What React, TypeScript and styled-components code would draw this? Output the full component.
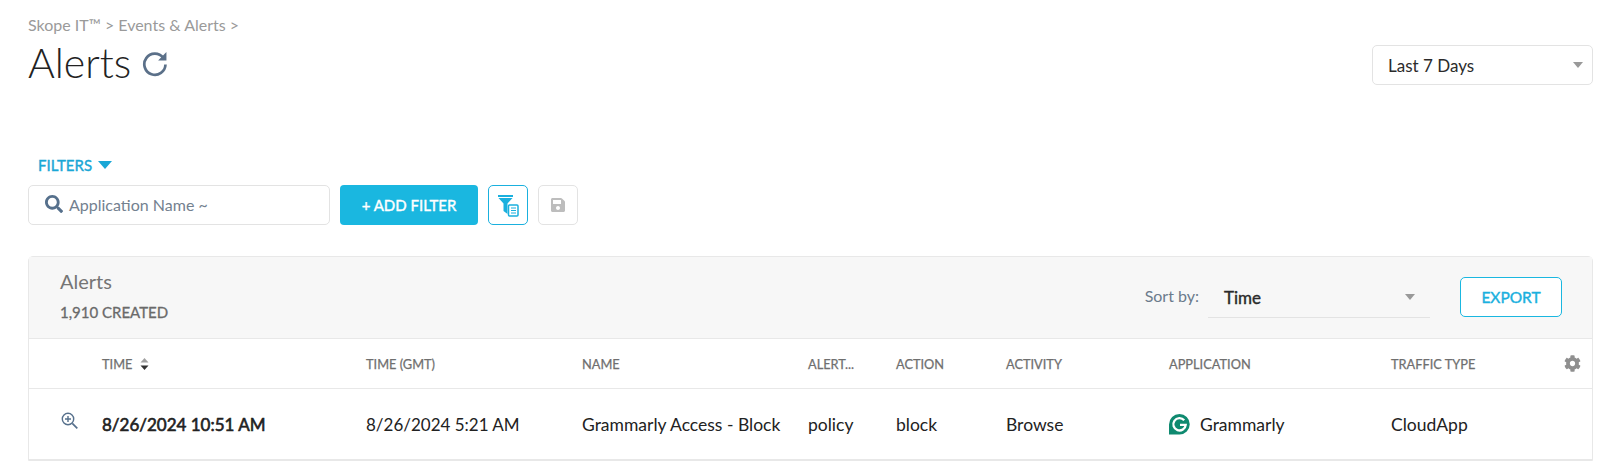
import styled, { createGlobalStyle } from 'styled-components'
import { FC } from 'react'
import { FaCog, FaSave, FaSearch } from 'react-icons/fa'

const GlobalStyle = createGlobalStyle`
  html, body {
    margin: 0;
    background: #fff;
    font-family: Lato, "Liberation Sans", sans-serif;
    color: #222;
  }
`

const Page = styled.div`
  width: 1600px;
  height: 462px;
  box-sizing: border-box;
  padding: 15px 7px 0 28px;
  overflow: hidden;
`

const TopRow = styled.div`
  display: flex;
  justify-content: space-between;
  align-items: flex-start;
  height: 140px;
`

const Breadcrumb = styled.div`
  font-size: 16px;
  line-height: 20px;
  color: #9a9a9a;
`

const TitleRow = styled.div`
  display: flex;
  align-items: center;
  gap: 10px;
  height: 42px;
  margin-top: 7px;
`

const Title = styled.h1`
  margin: 0;
  font-size: 41px;
  line-height: 42px;
  font-weight: 300;
  color: #222;
`

const DateSelect = styled.div`
  box-sizing: border-box;
  width: 221px;
  height: 40px;
  margin-top: 30px;
  padding: 0 9px 0 15px;
  display: flex;
  align-items: center;
  justify-content: space-between;
  background: #fff;
  border: 1px solid #e3e3e3;
  border-radius: 5px;
  font-size: 17px;
  color: #2b2b2b;
`

const Caret = styled.span<{ $color?: string; $size?: number }>`
  display: inline-block;
  width: 0;
  height: 0;
  border-left: ${(p) => p.$size ?? 5}px solid transparent;
  border-right: ${(p) => p.$size ?? 5}px solid transparent;
  border-top: ${(p) => (p.$size ?? 5) + 1}px solid ${(p) => p.$color ?? '#999'};
`

const FiltersToggle = styled.div`
  display: flex;
  align-items: center;
  gap: 6px;
  height: 20px;
  margin-left: 10px;
  font-size: 15px;
  -webkit-text-stroke: 0.4px #1aa7d6;
  color: #1aa7d6;
`

const FilterBar = styled.div`
  display: flex;
  align-items: center;
  gap: 10px;
  margin-top: 10px;
`

const SearchBox = styled.div`
  box-sizing: border-box;
  width: 302px;
  height: 40px;
  padding: 0 0 2px 16px;
  display: flex;
  align-items: center;
  gap: 6px;
  border: 1px solid #e3e3e3;
  border-radius: 5px;
  font-size: 16px;
  color: #73818f;
  svg {
    color: #56708c;
  }
`

const AddButton = styled.button`
  width: 138px;
  height: 40px;
  border: 0;
  border-radius: 4px;
  background: #1ab7e0;
  color: #fff;
  -webkit-text-stroke: 0.4px #fff;
  font: 400 15px Lato, sans-serif;
`

const IconButton = styled.button<{ $active?: boolean }>`
  box-sizing: border-box;
  width: 40px;
  height: 40px;
  padding: 0;
  display: flex;
  align-items: center;
  justify-content: center;
  background: #fff;
  border: 1px solid ${(p) => (p.$active ? '#1ab0de' : '#e3e3e3')};
  border-radius: 5px;
  color: #bdbdbd;
`

const Card = styled.section`
  box-sizing: border-box;
  width: 1565px;
  margin-top: 31px;
  border: 1px solid #e8e8e8;
  border-radius: 5px 5px 0 0;
`

const CardHeader = styled.header`
  box-sizing: border-box;
  height: 82px;
  padding: 12px 30px 0 31px;
  display: flex;
  justify-content: space-between;
  background: #f7f7f7;
  border-bottom: 1px solid #e8e8e8;
`

const CardHeading = styled.div`
  font-size: 20px;
  line-height: 24px;
  color: #757575;
`

const CardCount = styled.div`
  margin-top: 10px;
  font-size: 15px;
  line-height: 18px;
  -webkit-text-stroke: 0.3px #6a6a6a;
  color: #6a6a6a;
`

const SortArea = styled.div`
  display: flex;
  align-items: flex-start;
  margin-top: 8px;
`

const SortLabel = styled.span`
  margin-top: 10px;
  margin-right: 9px;
  font-size: 16px;
  line-height: 18px;
  color: #6b7b8c;
`

const SortSelect = styled.div`
  box-sizing: border-box;
  width: 222px;
  height: 41px;
  margin-right: 30px;
  padding: 0 15px 0 16px;
  display: flex;
  align-items: center;
  justify-content: space-between;
  border-bottom: 1px solid #e3e3e3;
  font-size: 17px;
  -webkit-text-stroke: 0.4px #2a2a2a;
  color: #2a2a2a;
`

const ExportButton = styled.button`
  box-sizing: border-box;
  width: 102px;
  height: 40px;
  background: #fff;
  border: 1px solid #1ab7e0;
  border-radius: 5px;
  color: #1ab0de;
  -webkit-text-stroke: 0.4px #1ab0de;
  font: 400 15.5px Lato, sans-serif;
`

const Row = styled.div<{ $height: number }>`
  box-sizing: border-box;
  height: ${(p) => p.$height}px;
  display: grid;
  grid-template-columns: 73px 264px 216px 226px 88px 110px 163px 222px 173px 1fr;
  align-items: center;
  border-bottom: 1px solid #e8e8e8;
`

const HeadCell = styled.div`
  display: flex;
  align-items: center;
  gap: 8px;
  font-size: 12.8px;
  -webkit-text-stroke: 0.25px #6f6f6f;
  color: #6f6f6f;
  white-space: nowrap;
`

const DataCell = styled.div<{ $bold?: boolean; $date?: boolean }>`
  display: flex;
  align-items: center;
  gap: 10px;
  font-size: ${(p) => (p.$date ? 17 : 17.5)}px;
  font-weight: 400;
  -webkit-text-stroke: ${(p) => (p.$bold ? '0.6px #222' : '0')};
  color: #222;
  white-space: nowrap;
`

const ZoomCell = styled.div`
  display: flex;
  padding: 0 0 7px 32px;
  color: #56708c;
`

const GearCell = styled.div`
  display: flex;
  color: #8f8f8f;
`

const RefreshIcon: FC = () => (
  <svg width="28" height="28" viewBox="0 0 27 27" fill="none">
    <path d="M21.5 8.5A10.2 10.2 0 1 0 23.6 15" stroke="#5b7089" strokeWidth="2.6" />
    <path d="M24.5 3v8h-8z" fill="#5b7089" />
  </svg>
)

const FilterListIcon: FC = () => (
  <svg width="22" height="24" viewBox="0 0 22 24">
    <path d="M1 2h15v2H1zM1.5 5h14l-5 5.500V21l-4-3v-7.500z" fill="#1ab0de" />
    <rect x="11.500" y="12" width="9.500" height="11" rx="1" fill="#fff" stroke="#1ab0de" strokeWidth="1.500" />
    <path d="M14 15h5M14 17.500h5M14 20h5" stroke="#1ab0de" strokeWidth="1.200" />
  </svg>
)

const ZoomPlusIcon: FC = () => (
  <svg width="18" height="18" viewBox="0 0 18 18" fill="none" stroke="currentColor">
    <circle cx="7" cy="7" r="5.700" strokeWidth="1.400" />
    <path d="M7 4v6M4 7h6" strokeWidth="1.400" />
    <path d="M11.300 11.300l5 5" strokeWidth="1.700" />
  </svg>
)

const SortIcon: FC = () => (
  <svg width="9" height="12" viewBox="0 0 9 12">
    <path d="M4.500 0L8.500 4.500H.5z" fill="#a0a0a0" />
    <path d="M4.500 12L.5 7.500h8z" fill="#333" />
  </svg>
)

const GrammarlyIcon: FC = () => (
  <svg width="21" height="21" viewBox="0 0 21 21">
    <path d="M10.500 0A10.200 10.200 0 0 1 10.500 20.500H0V10.500A10.500 10.500 0 0 1 10.500 0z" fill="#0f8a70" />
    <path d="M15.200 6.200A6.200 6.200 0 1 0 16.700 10.800H11" fill="none" stroke="#fff" strokeWidth="2.300" />
  </svg>
)

const App: FC = () => (
  <Page>
    <GlobalStyle />
    <TopRow>
      <div>
        <Breadcrumb>Skope IT™ &gt; Events &amp; Alerts &gt;</Breadcrumb>
        <TitleRow>
          <Title>Alerts</Title>
          <RefreshIcon />
        </TitleRow>
      </div>
      <DateSelect>
        Last 7 Days
        <Caret />
      </DateSelect>
    </TopRow>
    <FiltersToggle>
      FILTERS
      <Caret $color="#1aa7d6" $size={7} />
    </FiltersToggle>
    <FilterBar>
      <SearchBox>
        <FaSearch size={18} />
        Application Name ~
      </SearchBox>
      <AddButton>+ ADD FILTER</AddButton>
      <IconButton $active>
        <FilterListIcon />
      </IconButton>
      <IconButton>
        <FaSave size={16} />
      </IconButton>
    </FilterBar>
    <Card>
      <CardHeader>
        <div>
          <CardHeading>Alerts</CardHeading>
          <CardCount>1,910 CREATED</CardCount>
        </div>
        <SortArea>
          <SortLabel>Sort by:</SortLabel>
          <SortSelect>
            Time
            <Caret />
          </SortSelect>
          <ExportButton>EXPORT</ExportButton>
        </SortArea>
      </CardHeader>
      <Row $height={50}>
        <div />
        <HeadCell>
          TIME
          <SortIcon />
        </HeadCell>
        <HeadCell>TIME (GMT)</HeadCell>
        <HeadCell>NAME</HeadCell>
        <HeadCell>ALERT...</HeadCell>
        <HeadCell>ACTION</HeadCell>
        <HeadCell>ACTIVITY</HeadCell>
        <HeadCell>APPLICATION</HeadCell>
        <HeadCell>TRAFFIC TYPE</HeadCell>
        <GearCell>
          <FaCog size={17} />
        </GearCell>
      </Row>
      <Row $height={71}>
        <ZoomCell>
          <ZoomPlusIcon />
        </ZoomCell>
        <DataCell $bold $date>8/26/2024 10:51 AM</DataCell>
        <DataCell $date>8/26/2024 5:21 AM</DataCell>
        <DataCell>Grammarly Access - Block</DataCell>
        <DataCell>policy</DataCell>
        <DataCell>block</DataCell>
        <DataCell>Browse</DataCell>
        <DataCell>
          <GrammarlyIcon />
          Grammarly
        </DataCell>
        <DataCell>CloudApp</DataCell>
      </Row>
    </Card>
  </Page>
)

export default App
